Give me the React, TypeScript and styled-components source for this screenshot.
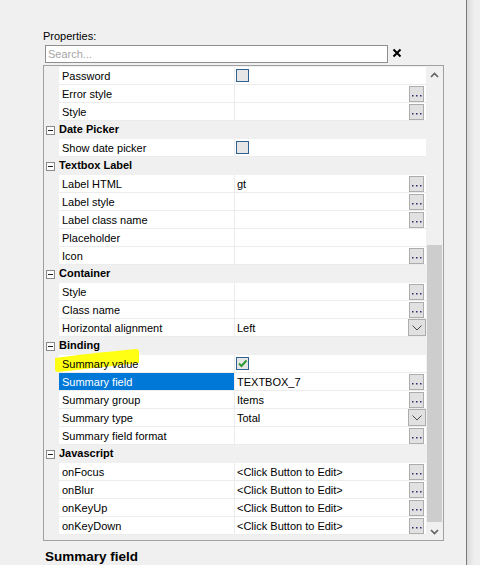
import React from "react";
import styled, { createGlobalStyle } from "styled-components";

type Editor = "dots" | "drop" | "check" | "checked" | "none";

type GridRow =
  | { kind: "group"; label: string }
  | {
      kind: "item";
      label: string;
      value?: string;
      editor: Editor;
      selected?: boolean;
      marked?: boolean;
    };

const CLICK = "<Click Button to Edit>";

const rows: GridRow[] = [
  { kind: "item", label: "Password", editor: "check" },
  { kind: "item", label: "Error style", editor: "dots" },
  { kind: "item", label: "Style", editor: "dots" },
  { kind: "group", label: "Date Picker" },
  { kind: "item", label: "Show date picker", editor: "check" },
  { kind: "group", label: "Textbox Label" },
  { kind: "item", label: "Label HTML", value: "gt", editor: "dots" },
  { kind: "item", label: "Label style", editor: "dots" },
  { kind: "item", label: "Label class name", editor: "dots" },
  { kind: "item", label: "Placeholder", editor: "none" },
  { kind: "item", label: "Icon", editor: "dots" },
  { kind: "group", label: "Container" },
  { kind: "item", label: "Style", editor: "dots" },
  { kind: "item", label: "Class name", editor: "dots" },
  { kind: "item", label: "Horizontal alignment", value: "Left", editor: "drop" },
  { kind: "group", label: "Binding" },
  { kind: "item", label: "Summary value", editor: "checked", marked: true },
  { kind: "item", label: "Summary field", value: "TEXTBOX_7", editor: "dots", selected: true },
  { kind: "item", label: "Summary group", value: "Items", editor: "dots" },
  { kind: "item", label: "Summary type", value: "Total", editor: "drop" },
  { kind: "item", label: "Summary field format", editor: "dots" },
  { kind: "group", label: "Javascript" },
  { kind: "item", label: "onFocus", value: CLICK, editor: "dots" },
  { kind: "item", label: "onBlur", value: CLICK, editor: "dots" },
  { kind: "item", label: "onKeyUp", value: CLICK, editor: "dots" },
  { kind: "item", label: "onKeyDown", value: CLICK, editor: "dots" },
];

const App = () => {
  return (
    <>
      <GlobalStyle />
      <Page>
        <Panel>
          <Caption>Properties:</Caption>
          <SearchRow>
            <SearchInput placeholder="Search..." />
            <ClearIcon viewBox="0 0 10 10">
              <path d="M1.5 1.5 L8.5 8.5 M8.5 1.5 L1.5 8.5" />
            </ClearIcon>
          </SearchRow>
          <Grid>
            <RowList>
              {rows.map((row, i) =>
                row.kind === "group" ? (
                  <GroupRow key={i}>
                    <MinusBox>
                      <MinusBar />
                    </MinusBox>
                    <GroupLabel>{row.label}</GroupLabel>
                  </GroupRow>
                ) : (
                  <ItemRow key={i}>
                    {row.marked && (
                      <Marker viewBox="0 -8 100 28">
                        <path d="M11 3 Q40 -1 92 -6 Q95 -6 95 -3 L95 8 Q60 12 14 17 Q11 17 11 14 Z" />
                      </Marker>
                    )}
                    <Gutter />
                    <NameCell $selected={row.selected}>
                      <CellText>{row.label}</CellText>
                    </NameCell>
                    <ValueCell>
                      {row.editor === "check" && <CheckBox />}
                      {row.editor === "checked" && (
                        <CheckBox>
                          <svg width="11" height="11" viewBox="0 0 11 11">
                            <path
                              d="M2 5.5 L4.5 8 L9.5 2.5"
                              stroke="#2e9b33"
                              strokeWidth="2"
                              fill="none"
                            />
                          </svg>
                        </CheckBox>
                      )}
                      <ValueText>{row.value}</ValueText>
                      {row.editor === "dots" && (
                        <EllipsisButton>
                          <svg width="13" height="14" viewBox="0 0 13 14">
                            <rect x="2" y="8" width="1.5" height="1.5" />
                            <rect x="6" y="8" width="1.5" height="1.5" />
                            <rect x="10" y="8" width="1.5" height="1.5" />
                          </svg>
                        </EllipsisButton>
                      )}
                      {row.editor === "drop" && (
                        <DropButton>
                          <svg width="10" height="6" viewBox="0 0 10 6">
                            <path d="M0.5 0.5 L5 5 L9.5 0.5" />
                          </svg>
                        </DropButton>
                      )}
                    </ValueCell>
                  </ItemRow>
                )
              )}
            </RowList>
            <ScrollBar>
              <ArrowBox>
                <svg width="9" height="6" viewBox="0 0 9 6">
                  <path d="M1 5 L4.5 1.5 L8 5" />
                </svg>
              </ArrowBox>
              <Track>
                <Thumb $offset={162} $size={277} />
              </Track>
              <ArrowBox>
                <svg width="9" height="6" viewBox="0 0 9 6">
                  <path d="M1 1 L4.5 4.5 L8 1" />
                </svg>
              </ArrowBox>
            </ScrollBar>
          </Grid>
          <SelectedTitle>Summary field</SelectedTitle>
        </Panel>
        <Divider />
        <Edge />
      </Page>
    </>
  );
};

const GlobalStyle = createGlobalStyle`
  html, body {
    margin: 0;
    padding: 0;
    background: #f0f0f0;
  }
  body {
    font-family: "Liberation Sans", Arial, sans-serif;
    font-size: 11px;
    color: #000;
  }
`;

const Page = styled.div`
  display: flex;
  width: 480px;
  height: 565px;
  overflow: hidden;
  background: #f0f0f0;
`;

const Panel = styled.div`
  width: 466px;
  flex-shrink: 0;
  box-sizing: border-box;
  padding: 30px 0 0 43px;
  display: flex;
  flex-direction: column;
`;

const Divider = styled.div`
  width: 1px;
  background: #7b7b7b;
`;

const Edge = styled.div`
  flex: 1;
  background: linear-gradient(to right, #dadada, #efefef 7px);
`;

const Caption = styled.div`
  height: 13px;
  line-height: 13px;
  font-size: 11px;
`;

const SearchRow = styled.div`
  display: flex;
  align-items: center;
  margin: 2px 0 0 2px;
  height: 18px;
`;

const SearchInput = styled.input`
  width: 343px;
  height: 18px;
  box-sizing: border-box;
  border: 1px solid #8f8f8f;
  background: #fff;
  padding: 0 2px;
  margin: 0;
  font-family: "Liberation Sans", Arial, sans-serif;
  font-size: 11px;
  outline: none;
  &::placeholder {
    color: #a6a6a6;
  }
`;

const ClearIcon = styled.svg`
  width: 10px;
  height: 10px;
  margin: -2px 0 0 4px;
  path {
    stroke: #000;
    stroke-width: 2;
    fill: none;
  }
`;

const Grid = styled.div`
  margin-top: 2px;
  width: 401px;
  height: 476px;
  box-sizing: border-box;
  border: 1px solid #a0a0a0;
  background: #f0f0f0;
  display: flex;
`;

const RowList = styled.div`
  flex: 1;
  padding-top: 1px;
  display: flex;
  flex-direction: column;
`;

const GroupRow = styled.div`
  height: 18px;
  display: flex;
  align-items: center;
  background: #f0f0f0;
`;

const MinusBox = styled.div`
  width: 9px;
  height: 9px;
  box-sizing: border-box;
  margin: 0 4px 0 2px;
  border: 1px solid #8a8a8a;
  background: #fdfdfd;
  display: flex;
  align-items: center;
  justify-content: center;
`;

const MinusBar = styled.div`
  width: 5px;
  height: 1px;
  background: #202020;
`;

const GroupLabel = styled.span`
  font-weight: bold;
  line-height: 17px;
  padding-bottom: 1px;
`;

const ItemRow = styled.div`
  position: relative;
  height: 18px;
  display: grid;
  grid-template-columns: 15px 176px 1fr;
`;

const Marker = styled.svg`
  position: absolute;
  left: 0;
  top: -8px;
  width: 100px;
  height: 28px;
  z-index: 0;
  path {
    fill: #ffff14;
  }
`;

const Gutter = styled.div`
  background: #f0f0f0;
`;

const NameCell = styled.div<{ $selected?: boolean }>`
  box-sizing: border-box;
  height: 18px;
  padding-left: 3px;
  line-height: 18px;
  border-bottom: 1px solid #ececec;
  border-right: 1px solid #ececec;
  background: ${(p) => (p.$selected ? "#0078d7" : "#fff")};
  color: ${(p) => (p.$selected ? "#fff" : "#000")};
  white-space: nowrap;
  overflow: hidden;
`;

const CellText = styled.span`
  position: relative;
  z-index: 1;
`;

const ValueCell = styled.div`
  box-sizing: border-box;
  height: 18px;
  padding-left: 1px;
  border-bottom: 1px solid #ececec;
  background: #fff;
  display: flex;
  align-items: flex-start;
`;

const ValueText = styled.span`
  flex: 1;
  padding-left: 1px;
  line-height: 18px;
  white-space: nowrap;
`;

const CheckBox = styled.div`
  width: 13px;
  height: 13px;
  box-sizing: border-box;
  margin-top: 2px;
  border: 1px solid #2f5f93;
  background: #e6e6e6;
  display: flex;
  align-items: center;
  justify-content: center;
`;

const EllipsisButton = styled.div`
  width: 15px;
  height: 16px;
  box-sizing: border-box;
  margin: 1px 2px 0 0;
  border: 1px solid #adadad;
  background: #e1e1e1;
  display: flex;
  align-items: flex-start;
  justify-content: center;
  svg rect {
    fill: #2e2a6e;
  }
`;

const DropButton = styled.div`
  width: 18px;
  height: 17px;
  box-sizing: border-box;
  border: 1px solid #adadad;
  background: #e1e1e1;
  display: flex;
  align-items: center;
  justify-content: center;
  svg path {
    stroke: #4a4a4a;
    stroke-width: 1;
    fill: none;
  }
`;

const ScrollBar = styled.div`
  width: 17px;
  display: flex;
  flex-direction: column;
  background: #f0f0f0;
`;

const ArrowBox = styled.div`
  height: 17px;
  display: flex;
  align-items: center;
  justify-content: center;
  svg path {
    stroke: #606060;
    stroke-width: 1.6;
    fill: none;
  }
`;

const Track = styled.div`
  flex: 1;
  display: flex;
  flex-direction: column;
  align-items: center;
`;

const Thumb = styled.div<{ $offset: number; $size: number }>`
  width: 15px;
  margin-top: ${(p) => p.$offset}px;
  height: ${(p) => p.$size}px;
  background: #cdcdcd;
`;

const SelectedTitle = styled.div`
  margin: 8px 0 0 2px;
  font-size: 13.5px;
  font-weight: bold;
  line-height: 16px;
`;

export default App;
